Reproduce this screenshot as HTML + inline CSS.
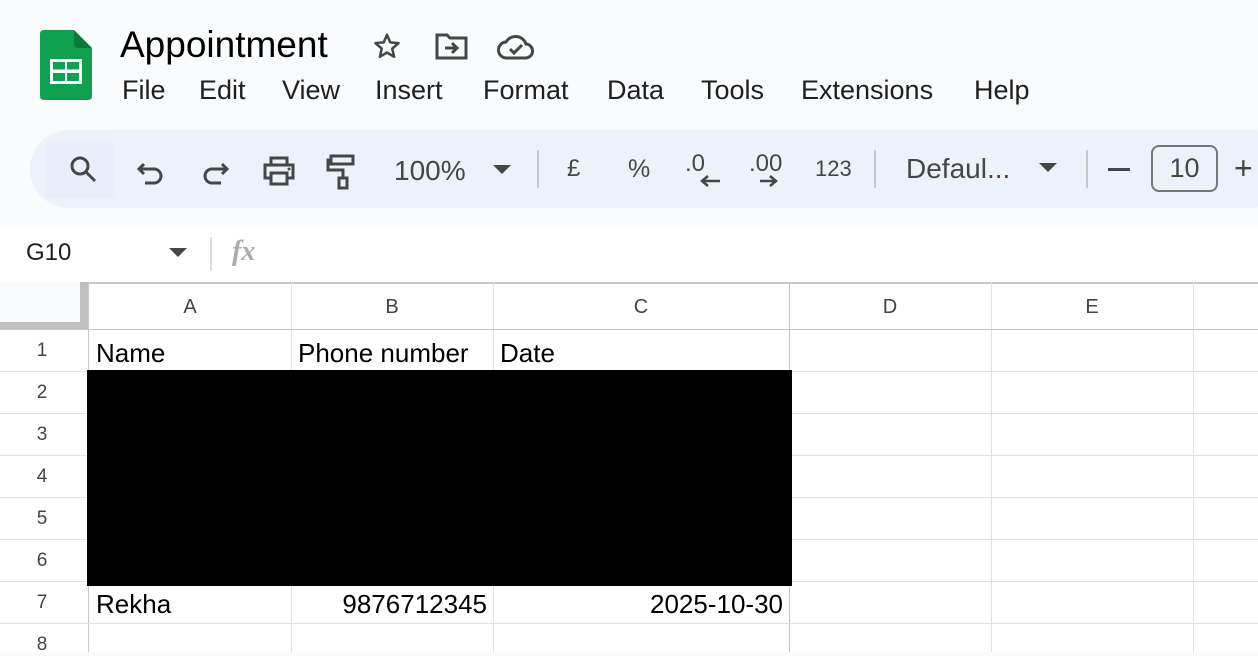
<!DOCTYPE html>
<html><head><style>
*{margin:0;padding:0;box-sizing:border-box}
body{width:1258px;height:652px;overflow:hidden;background:#f9fbfd;font-family:"Liberation Sans",Arial,sans-serif;position:relative;color:#1f1f1f}
.a{position:absolute}
.menu span{position:absolute;top:0;font-size:27px;color:#1f1f1f}
.tb{position:absolute;left:30px;top:130px;width:1260px;height:78px;background:#edf2fa;border-radius:39px}
.t{position:absolute;font-size:28px;color:#444746}
.sep{position:absolute;top:150px;width:2px;height:38px;background:#c7c7c7}
.grid{position:absolute;left:0;top:282px;width:1258px;height:370px;background:#fff}
.vl{position:absolute;top:0;width:1px;height:370px;background:#e1e1e1}
.hl{position:absolute;left:0;width:1258px;height:1px;background:#e1e1e1}
.ch{position:absolute;top:14px;font-size:20px;color:#444;text-align:center}
.rn{position:absolute;left:0;width:84px;text-align:center;font-size:19px;color:#444}
.c{position:absolute;font-size:26px;color:#000}
</style></head><body>
<svg class="a" style="left:40px;top:30px" width="52" height="70" viewBox="0 0 52 70"><path d="M4 0H34L52 18V66Q52 70 48 70H4Q0 70 0 66V4Q0 0 4 0Z" fill="#0fa14f"/><path d="M34 0L52 18H38Q34 18 34 14Z" fill="#0a7a39"/><rect x="10" y="29" width="32" height="25" fill="#fff"/><rect x="13" y="32" width="12" height="7.5" fill="#0fa14f"/><rect x="27" y="32" width="12" height="7.5" fill="#0fa14f"/><rect x="13" y="43" width="12" height="8" fill="#0fa14f"/><rect x="27" y="43" width="12" height="8" fill="#0fa14f"/></svg>
<div class="a" style="left:120px;top:24px;font-size:37px;color:#000">Appointment</div>
<svg class="a" style="left:371px;top:31px" width="32" height="30" viewBox="0 0 24 24"><path d="M12 3l2.6 6.1 6.6.6-5 4.4 1.5 6.5L12 17.2l-5.7 3.4 1.5-6.5-5-4.4 6.6-.6z" fill="none" stroke="#444746" stroke-width="2" stroke-linejoin="round"/></svg>
<svg class="a" style="left:435px;top:33px" width="34" height="28" viewBox="0 0 34 28"><path d="M2 2h10l3 3h16v20H2z" fill="none" stroke="#444746" stroke-width="3"/><path d="M10 15h12M17 10l5 5-5 5" fill="none" stroke="#444746" stroke-width="3"/></svg>
<svg class="a" style="left:497px;top:33px" width="38" height="28" viewBox="0 0 38 28"><path d="M10 25H28a7 7 0 0 0 1-14A11 11 0 0 0 9 9a8 8 0 0 0 1 16z" fill="none" stroke="#444746" stroke-width="3"/><path d="M13 16l4 4 8-8" fill="none" stroke="#444746" stroke-width="3"/></svg>
<div class="menu a" style="left:0;top:75px;width:1100px;height:34px">
<span style="left:122px">File</span><span style="left:199px">Edit</span><span style="left:282px">View</span><span style="left:375px">Insert</span><span style="left:483px">Format</span><span style="left:607px">Data</span><span style="left:701px">Tools</span><span style="left:801px">Extensions</span><span style="left:974px">Help</span></div>
<div class="tb"></div>
<div class="a" style="left:45px;top:140px;width:70px;height:58px;background:#e9eef8;border-radius:4px"></div>
<svg class="a" style="left:68px;top:154px" width="32" height="32" viewBox="0 0 32 32"><circle cx="12" cy="12" r="8" fill="none" stroke="#444746" stroke-width="3"/><path d="M18 18l9 9" stroke="#444746" stroke-width="3"/></svg>
<svg class="a" style="left:136px;top:156px" width="30" height="30" viewBox="0 0 30 30"><path d="M8 8L3 13l5 5M3 13h15a7 7 0 0 1 0 14H9" fill="none" stroke="#444746" stroke-width="3"/></svg>
<svg class="a" style="left:200px;top:156px" width="30" height="30" viewBox="0 0 30 30"><path d="M22 8l5 5-5 5M27 13H12a7 7 0 0 0 0 14h9" fill="none" stroke="#444746" stroke-width="3"/></svg>
<svg class="a" style="left:262px;top:155px" width="34" height="32" viewBox="0 0 34 32"><path d="M9 9V3h16v6M9 23H3V10h28v13h-6M9 18h16v11H9z" fill="none" stroke="#444746" stroke-width="3"/><circle cx="27" cy="14" r="1.5" fill="#444746"/></svg>
<svg class="a" style="left:325px;top:154px" width="34" height="36" viewBox="0 0 34 36"><path d="M6 2h22v8H6zM6 6H3v10h15v8" fill="none" stroke="#444746" stroke-width="3"/><rect x="14" y="24" width="8" height="10" fill="none" stroke="#444746" stroke-width="3"/></svg>
<div class="t" style="left:394px;top:155px">100%</div>
<svg class="a" style="left:493px;top:165px" width="18" height="10"><path d="M0 0h18L9 9z" fill="#444746"/></svg>
<div class="sep" style="left:537px"></div>
<div class="t" style="left:567px;top:155px;font-size:24px">£</div>
<div class="t" style="left:628px;top:155px;font-size:25px">%</div>
<div class="t" style="left:685px;top:150px;font-size:24px">.0</div>
<svg class="a" style="left:698px;top:174px" width="24" height="14"><path d="M22 7H4M10 2L4 7l6 5" fill="none" stroke="#444746" stroke-width="2.5"/></svg>
<div class="t" style="left:749px;top:150px;font-size:24px">.00</div>
<svg class="a" style="left:758px;top:174px" width="24" height="14"><path d="M2 7h16M12 2l6 5-6 5" fill="none" stroke="#444746" stroke-width="2.5"/></svg>
<div class="t" style="left:815px;top:156px;font-size:22px">123</div>
<div class="sep" style="left:874px"></div>
<div class="t" style="left:906px;top:153px">Defaul...</div>
<svg class="a" style="left:1039px;top:163px" width="18" height="10"><path d="M0 0h18L9 9z" fill="#444746"/></svg>
<div class="sep" style="left:1086px"></div>
<div class="a" style="left:1108px;top:168px;width:22px;height:3px;background:#444746"></div>
<div class="a" style="left:1151px;top:145px;width:67px;height:47px;border:2px solid #747775;border-radius:8px;font-size:27px;color:#444746;text-align:center;line-height:43px">10</div>
<div class="t" style="left:1234px;top:150px;font-size:32px">+</div>
<div class="a" style="left:0;top:225px;width:1258px;height:57px;background:#fff"></div>
<div class="a" style="left:26px;top:239px;font-size:24px;color:#1f1f1f">G10</div>
<svg class="a" style="left:169px;top:248px" width="18" height="10"><path d="M0 0h18L9 9z" fill="#444746"/></svg>
<div class="a" style="left:210px;top:237px;width:2px;height:34px;background:#ddd"></div>
<div class="a" style="left:232px;top:236px;font-size:28px;color:#aaa;font-style:italic;font-family:'Liberation Serif',serif;font-weight:bold">fx</div>
<div class="grid">
<div class="a" style="left:0;top:0;width:1258px;height:48px;background:#fff;border-top:2px solid #c7c7c7"></div>
<div class="a" style="left:0;top:0;width:89px;height:48px;background:#f8f9fa"></div>
<div class="a" style="left:80px;top:0;width:9px;height:48px;background:#c0c0c0"></div>
<div class="a" style="left:0;top:40px;width:89px;height:8px;background:#c0c0c0"></div>
<div class="vl" style="left:291px;height:48px;background:#c7c7c7"></div><div class="vl" style="left:291px"></div>
<div class="vl" style="left:493px"></div><div class="vl" style="left:789px;background:#c7c7c7"></div>
<div class="vl" style="left:991px"></div><div class="vl" style="left:1193px"></div>
<div class="vl" style="left:88px;background:#c7c7c7"></div>
<div class="hl" style="top:47px;background:#c7c7c7"></div>
<div class="hl" style="top:89px"></div><div class="hl" style="top:131px"></div><div class="hl" style="top:173px"></div><div class="hl" style="top:215px"></div><div class="hl" style="top:257px"></div><div class="hl" style="top:299px"></div><div class="hl" style="top:341px"></div>
<div class="ch" style="left:89px;width:202px">A</div><div class="ch" style="left:291px;width:202px">B</div><div class="ch" style="left:493px;width:296px">C</div><div class="ch" style="left:789px;width:202px">D</div><div class="ch" style="left:991px;width:202px">E</div>
<div class="rn" style="top:58px">1</div><div class="rn" style="top:100px">2</div><div class="rn" style="top:142px">3</div><div class="rn" style="top:184px">4</div><div class="rn" style="top:226px">5</div><div class="rn" style="top:268px">6</div><div class="rn" style="top:310px">7</div><div class="rn" style="top:352px">8</div>
<div class="c" style="left:96px;top:56px">Name</div><div class="c" style="left:298px;top:56px">Phone number</div><div class="c" style="left:500px;top:56px">Date</div>
<div class="c" style="left:96px;top:307px">Rekha</div><div class="c" style="left:291px;top:307px;width:196px;text-align:right">9876712345</div><div class="c" style="left:493px;top:307px;width:290px;text-align:right">2025-10-30</div>
<div class="a" style="left:87px;top:88px;width:705px;height:216px;background:#000"></div>
</div>
</body></html>
